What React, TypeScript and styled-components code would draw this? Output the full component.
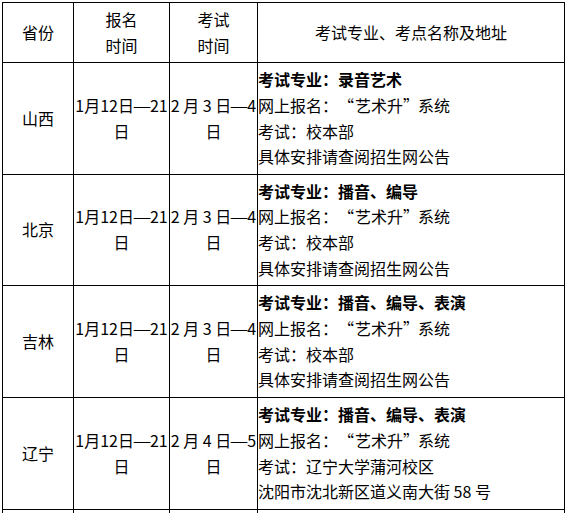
import React from "react";
import styled, { createGlobalStyle } from "styled-components";

const GlobalStyle = createGlobalStyle`
  html, body {
    margin: 0;
    padding: 0;
    background: #fff;
    overflow: hidden;
  }
`;

const Page = styled.div`
  padding: 2px 0 0 2px;
`;

const Table = styled.table`
  border-collapse: collapse;
  table-layout: fixed;
  width: 563px;
  font-family: "Noto Sans CJK SC", "Liberation Sans", sans-serif;
  font-size: 16px;
  line-height: 25.7px;
  color: #000;
`;

const HeadCell = styled.th`
  border: 1px solid #000;
  height: 59px;
  padding: 0;
  font-weight: normal;
  text-align: center;
  vertical-align: middle;
`;

const Cell = styled.td<{ $align?: "left" | "center"; $nowrap?: boolean }>`
  border: 1px solid #000;
  padding: 0;
  text-align: ${(p) => p.$align || "center"};
  vertical-align: middle;
  white-space: ${(p) => (p.$nowrap ? "nowrap" : "normal")};
`;

const Row = styled.tr<{ $h: number }>`
  height: ${(p) => p.$h}px;
`;

const Major = styled.div`
  font-weight: bold;
`;

const Line = styled.div``;

// full-width curly quotes, as the CJK typeset in the source has them
const Quote = styled.span<{ $side: "open" | "close" }>`
  display: inline-block;
  width: ${(p) => (p.$side === "open" ? "17px" : "15px")};
  text-align: ${(p) => (p.$side === "open" ? "right" : "left")};
  padding-right: ${(p) => (p.$side === "open" ? "2px" : "0")};
  box-sizing: border-box;
`;

const Dash = styled.span`
  display: inline-block;
  width: 16px;
  text-align: center;
  transform: scaleX(1.3);
`;

type Item = {
  province: string;
  signup: [string, string, string];
  exam: [string, string, string];
  major: string;
  place: string;
  note: string;
  h: number;
};

const rows: Item[] = [
  {
    province: "山西",
    signup: ["1月12日", "21", "日"],
    exam: ["2 月 3 日", "4", "日"],
    major: "考试专业：录音艺术",
    place: "考试：校本部",
    note: "具体安排请查阅招生网公告",
    h: 112,
  },
  {
    province: "北京",
    signup: ["1月12日", "21", "日"],
    exam: ["2 月 3 日", "4", "日"],
    major: "考试专业：播音、编导",
    place: "考试：校本部",
    note: "具体安排请查阅招生网公告",
    h: 111,
  },
  {
    province: "吉林",
    signup: ["1月12日", "21", "日"],
    exam: ["2 月 3 日", "4", "日"],
    major: "考试专业：播音、编导、表演",
    place: "考试：校本部",
    note: "具体安排请查阅招生网公告",
    h: 112,
  },
  {
    province: "辽宁",
    signup: ["1月12日", "21", "日"],
    exam: ["2 月 4 日", "5", "日"],
    major: "考试专业：播音、编导、表演",
    place: "考试：辽宁大学蒲河校区",
    note: "沈阳市沈北新区道义南大街 58 号",
    h: 112,
  },
];

function DateRange({ parts }: { parts: [string, string, string] }) {
  return (
    <>
      {parts[0]}
      <Dash>—</Dash>
      {parts[1]}
      <br />
      {parts[2]}
    </>
  );
}

export default function App() {
  return (
    <>
      <GlobalStyle />
      <Page>
        <Table>
          <colgroup>
            <col style={{ width: 71 }} />
            <col style={{ width: 96 }} />
            <col style={{ width: 88 }} />
            <col style={{ width: 307 }} />
          </colgroup>
          <thead>
            <tr>
              <HeadCell>省份</HeadCell>
              <HeadCell>
                报名
                <br />
                时间
              </HeadCell>
              <HeadCell>
                考试
                <br />
                时间
              </HeadCell>
              <HeadCell>考试专业、考点名称及地址</HeadCell>
            </tr>
          </thead>
          <tbody>
            {rows.map((r) => (
              <Row key={r.province} $h={r.h}>
                <Cell>{r.province}</Cell>
                <Cell $nowrap>
                  <DateRange parts={r.signup} />
                </Cell>
                <Cell $nowrap>
                  <DateRange parts={r.exam} />
                </Cell>
                <Cell $align="left">
                  <Major>{r.major}</Major>
                  <Line>
                    网上报名：<Quote $side="open">“</Quote>艺术升
                    <Quote $side="close">”</Quote>系统
                  </Line>
                  <Line>{r.place}</Line>
                  <Line>{r.note}</Line>
                </Cell>
              </Row>
            ))}
            <Row $h={112}>
              <Cell />
              <Cell />
              <Cell />
              <Cell />
            </Row>
          </tbody>
        </Table>
      </Page>
    </>
  );
}
